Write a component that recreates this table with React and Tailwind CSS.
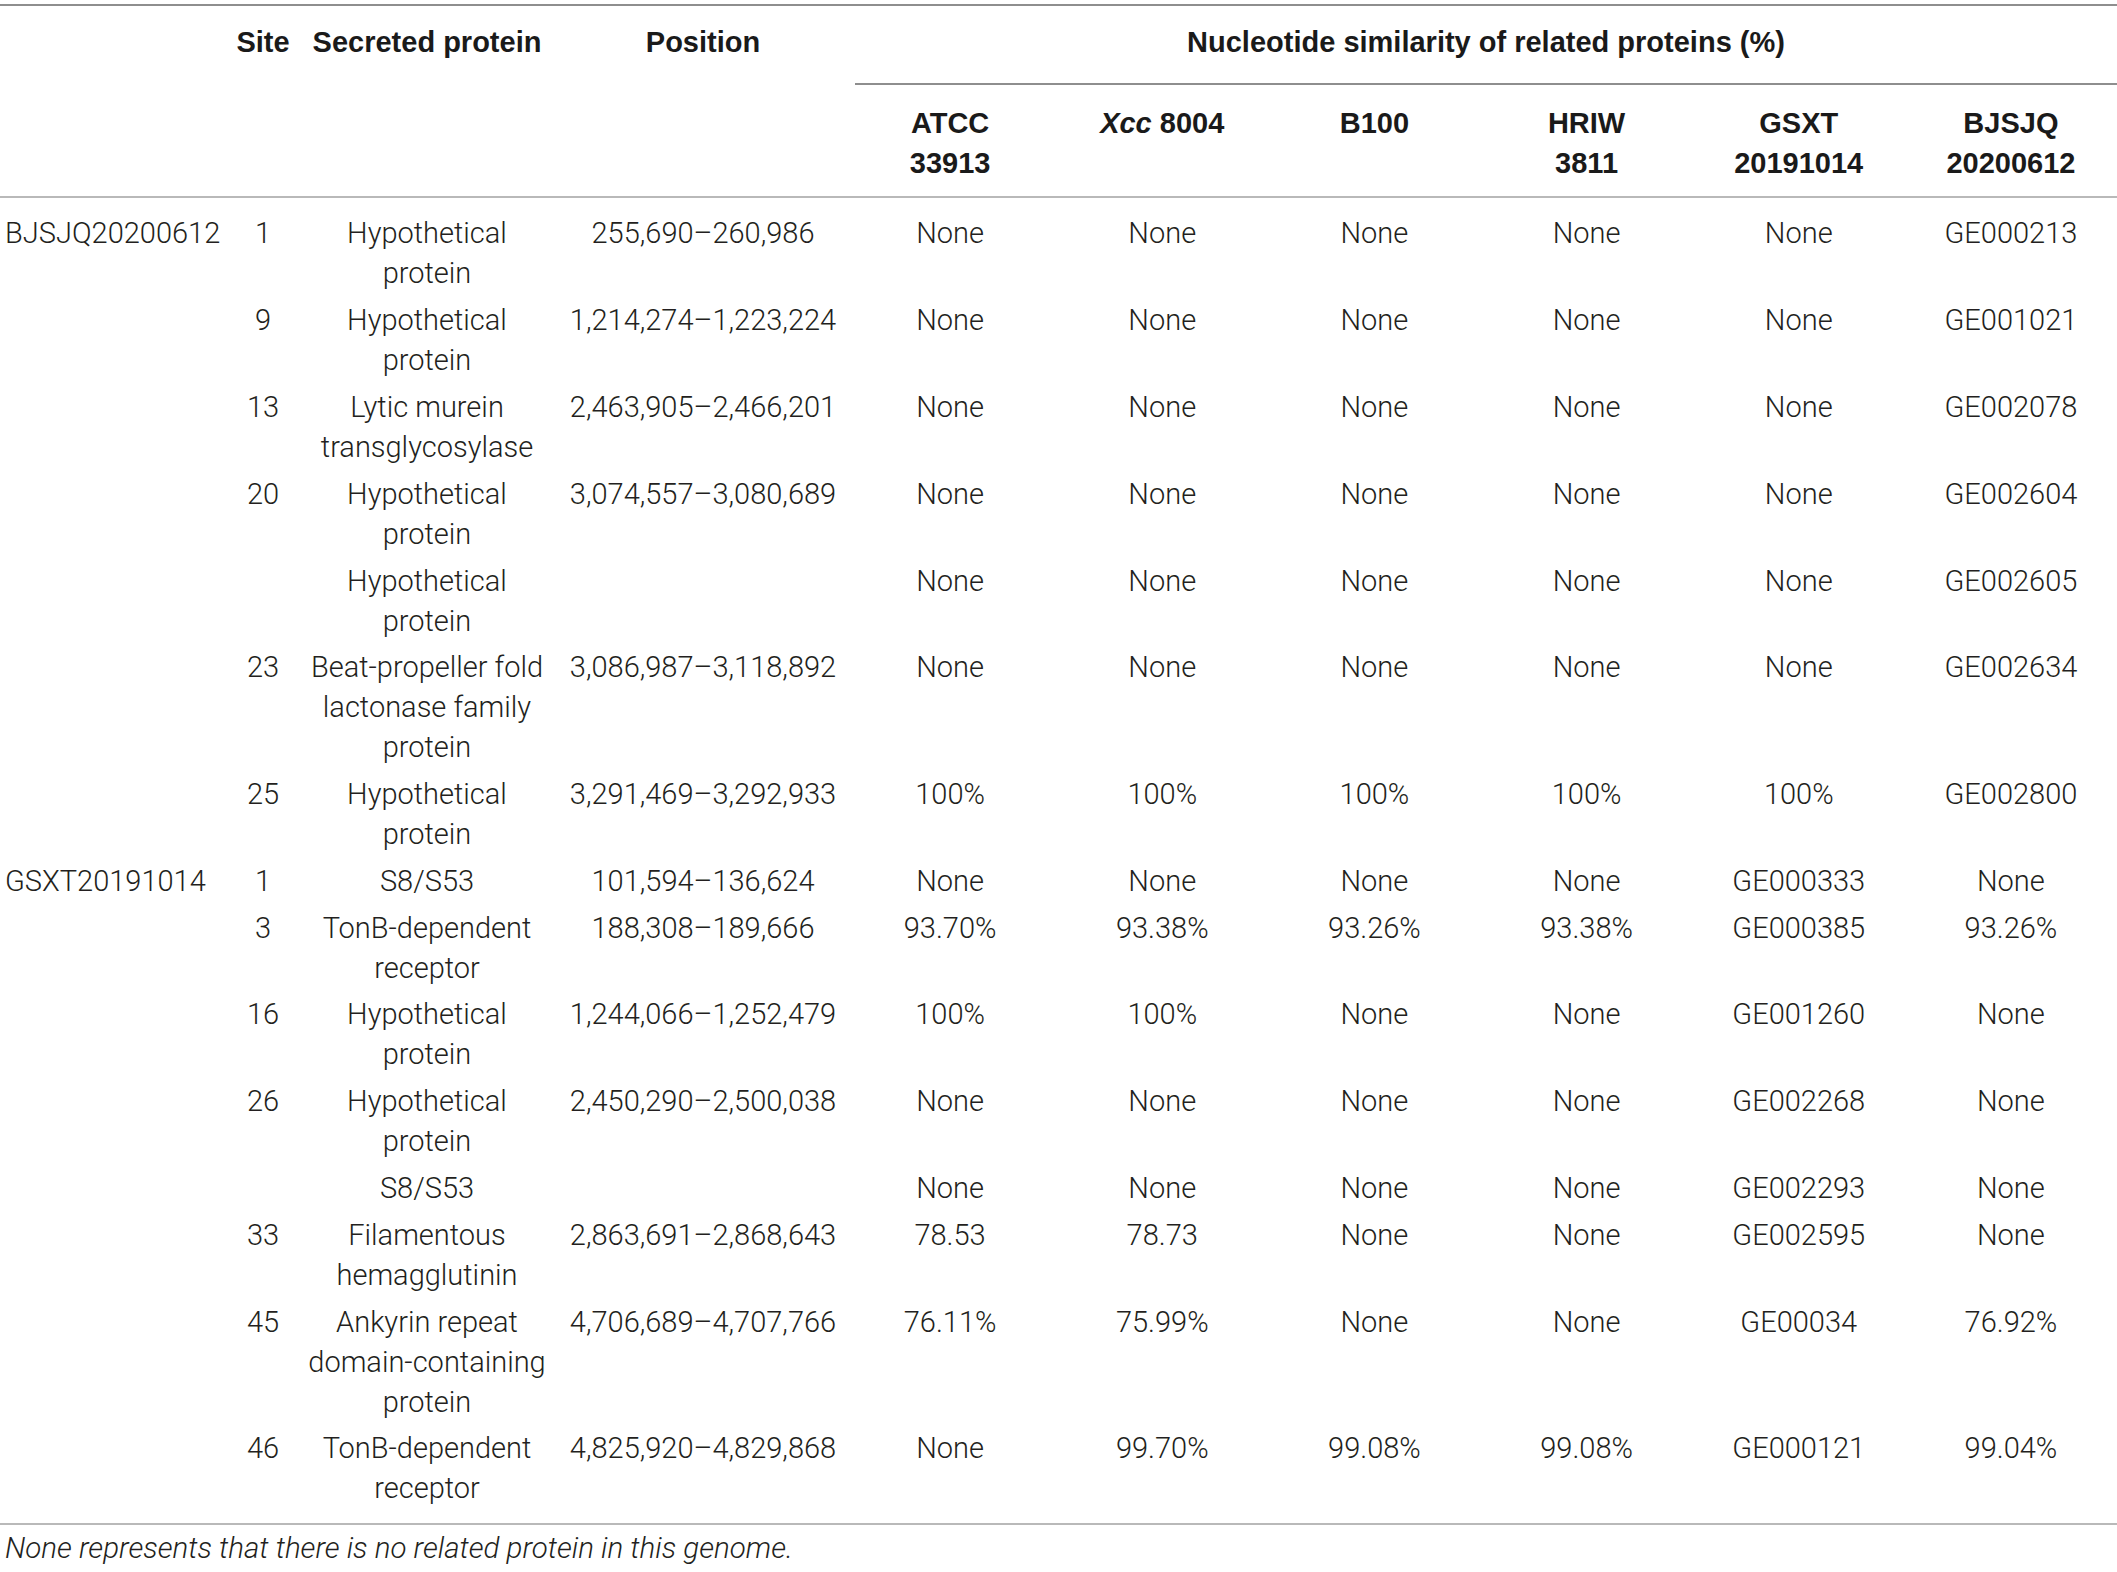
const rows = [
  { strain: "BJSJQ20200612", site: "1", protein: ["Hypothetical", "protein"], pos: "255,690–260,986", vals: ["None", "None", "None", "None", "None", "GE000213"] },
  { strain: "", site: "9", protein: ["Hypothetical", "protein"], pos: "1,214,274–1,223,224", vals: ["None", "None", "None", "None", "None", "GE001021"] },
  { strain: "", site: "13", protein: ["Lytic murein", "transglycosylase"], pos: "2,463,905–2,466,201", vals: ["None", "None", "None", "None", "None", "GE002078"] },
  { strain: "", site: "20", protein: ["Hypothetical", "protein"], pos: "3,074,557–3,080,689", vals: ["None", "None", "None", "None", "None", "GE002604"] },
  { strain: "", site: "", protein: ["Hypothetical", "protein"], pos: "", vals: ["None", "None", "None", "None", "None", "GE002605"] },
  { strain: "", site: "23", protein: ["Beat-propeller fold", "lactonase family", "protein"], pos: "3,086,987–3,118,892", vals: ["None", "None", "None", "None", "None", "GE002634"] },
  { strain: "", site: "25", protein: ["Hypothetical", "protein"], pos: "3,291,469–3,292,933", vals: ["100%", "100%", "100%", "100%", "100%", "GE002800"] },
  { strain: "GSXT20191014", site: "1", protein: ["S8/S53"], pos: "101,594–136,624", vals: ["None", "None", "None", "None", "GE000333", "None"] },
  { strain: "", site: "3", protein: ["TonB-dependent", "receptor"], pos: "188,308–189,666", vals: ["93.70%", "93.38%", "93.26%", "93.38%", "GE000385", "93.26%"] },
  { strain: "", site: "16", protein: ["Hypothetical", "protein"], pos: "1,244,066–1,252,479", vals: ["100%", "100%", "None", "None", "GE001260", "None"] },
  { strain: "", site: "26", protein: ["Hypothetical", "protein"], pos: "2,450,290–2,500,038", vals: ["None", "None", "None", "None", "GE002268", "None"] },
  { strain: "", site: "", protein: ["S8/S53"], pos: "", vals: ["None", "None", "None", "None", "GE002293", "None"] },
  { strain: "", site: "33", protein: ["Filamentous", "hemagglutinin"], pos: "2,863,691–2,868,643", vals: ["78.53", "78.73", "None", "None", "GE002595", "None"] },
  { strain: "", site: "45", protein: ["Ankyrin repeat", "domain-containing", "protein"], pos: "4,706,689–4,707,766", vals: ["76.11%", "75.99%", "None", "None", "GE00034", "76.92%"] },
  { strain: "", site: "46", protein: ["TonB-dependent", "receptor"], pos: "4,825,920–4,829,868", vals: ["None", "99.70%", "99.08%", "99.08%", "GE000121", "99.04%"] },
]

const strains = [
  ["ATCC", "33913"],
  [<><i>Xcc</i> 8004</>],
  ["B100"],
  ["HRIW", "3811"],
  ["GSXT", "20191014"],
  ["BJSJQ", "20200612"],
]

const grid = "grid grid-cols-[234px_58px_270px_282px_repeat(6,1fr)]"

const Lines = ({ items }) =>
  items.map((t, i) => (
    <div key={i} className="whitespace-nowrap">
      {t}
    </div>
  ))

export default function App() {
  return (
    <div className="w-[2117px] bg-white pt-[4px] font-['Roboto','Liberation_Sans',sans-serif] text-[29px] leading-[40px] text-[#231f20]">
      <div className="border-t-2 border-[#8e8e8e]">
        {/* header, first line */}
        <div className={`${grid} font-['Liberation_Sans',Arial,sans-serif] font-bold text-[#1a1a1a]`}>
          <div className="pt-[16px] pb-[21px]"></div>
          <div className="pt-[16px] pb-[21px] text-center whitespace-nowrap">Site</div>
          <div className="pt-[16px] pb-[21px] text-center whitespace-nowrap">Secreted protein</div>
          <div className="pt-[16px] pb-[21px] text-center whitespace-nowrap">Position</div>
          <div className="col-span-6 pl-[11px]">
            <div className="pt-[16px] pb-[21px] text-center whitespace-nowrap border-b-2 border-[#8e8e8e]">
              Nucleotide similarity of related proteins (%)
            </div>
          </div>
        </div>

        {/* header, second line */}
        <div className={`${grid} font-['Liberation_Sans',Arial,sans-serif] font-bold text-[#1a1a1a] border-b-2 border-[#b9b9b9]`}>
          <div></div>
          <div></div>
          <div></div>
          <div></div>
          {strains.map((s, i) => (
            <div key={i} className="pt-[18px] pb-[13px] text-center">
              <Lines items={s} />
            </div>
          ))}
        </div>

        {/* body */}
        <div className="pt-[12px] pb-[11px] font-light border-b-2 border-[#b9b9b9]">
          {rows.map((r, i) => (
            <div key={i} className={`${grid} py-[3.4px]`}>
              <div className="pl-[5px] whitespace-nowrap">{r.strain}</div>
              <div className="text-center">{r.site}</div>
              <div className="text-center">
                <Lines items={r.protein} />
              </div>
              <div className="text-center whitespace-nowrap">{r.pos}</div>
              {r.vals.map((v, j) => (
                <div key={j} className="text-center whitespace-nowrap">
                  {v}
                </div>
              ))}
            </div>
          ))}
        </div>

        <div className="pt-[3px] pl-[5px] italic font-light text-[29.5px]">
          None represents that there is no related protein in this genome.
        </div>
      </div>
    </div>
  )
}
